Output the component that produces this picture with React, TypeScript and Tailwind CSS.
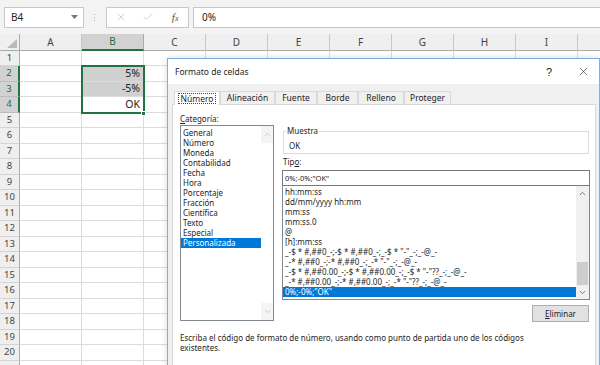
import { X, Check, ChevronUp, ChevronDown } from "lucide-react";

const COLS = ["A", "B", "C", "D", "E", "F", "G", "H", "I", "J"];
const ROWS = Array.from({ length: 21 }, (_, i) => i + 1);

const CATEGORIES = [
  "General",
  "Número",
  "Moneda",
  "Contabilidad",
  "Fecha",
  "Hora",
  "Porcentaje",
  "Fracción",
  "Científica",
  "Texto",
  "Especial",
  "Personalizada",
];

const TYPES = [
  "hh:mm:ss",
  "dd/mm/yyyy hh:mm",
  "mm:ss",
  "mm:ss.0",
  "@",
  "[h]:mm:ss",
  '_-$ * #,##0_-;-$ * #,##0_-;_-$ * "-"_-;_-@_-',
  '_-* #,##0_-;-* #,##0_-;_-* "-"_-;_-@_-',
  '_-$ * #,##0.00_-;-$ * #,##0.00_-;_-$ * "-"??_-;_-@_-',
  '_-* #,##0.00_-;-* #,##0.00_-;_-* "-"??_-;_-@_-',
  '0%;-0%;"OK"',
];

const TABS = [
  { label: "Número", w: "w-[46px]" },
  { label: "Alineación", w: "w-[55px]" },
  { label: "Fuente", w: "w-[42px]" },
  { label: "Borde", w: "w-[41px]" },
  { label: "Relleno", w: "w-[46px]" },
  { label: "Proteger", w: "w-[47px]" },
];

function Toolbar() {
  return (
    <div className="h-[34px] bg-[#f3f3f3] flex items-center">
      <div className="ml-[4px] w-[80px] h-[21px] bg-white border border-[#c8c8c8] flex items-center pl-[6px] pr-[5px] text-[10px] text-[#222]">
        <span>B4</span>
        <svg className="ml-auto" width="7" height="4" viewBox="0 0 7 4">
          <path d="M0 0h7L3.5 4z" fill="#777" />
        </svg>
      </div>
      <div className="ml-[10px] flex flex-col gap-[2px]">
        <div className="w-[1px] h-[1px] bg-[#b0b0b0]" />
        <div className="w-[1px] h-[1px] bg-[#b0b0b0]" />
        <div className="w-[1px] h-[1px] bg-[#b0b0b0]" />
      </div>
      <div className="ml-[11px] w-[83px] h-[21px] bg-white border border-[#c8c8c8] flex items-center">
        <div className="w-[28px] flex justify-center text-[#b4b4b4]">
          <X size={12} strokeWidth={1.2} />
        </div>
        <div className="w-[28px] flex justify-center text-[#b4b4b4]">
          <Check size={12} strokeWidth={1.2} />
        </div>
        <div className="w-[26px] flex justify-center text-[#555] font-['Liberation_Serif',serif] italic text-[11px] leading-none">
          <span>f</span>
          <span className="text-[8px] mt-[3px]">x</span>
        </div>
      </div>
      <div className="ml-[4px] flex-1 h-[21px] bg-white border border-[#c8c8c8] border-r-0 flex items-center pl-[8px] text-[10px] text-[#222]">
        0%
      </div>
    </div>
  );
}

function Grid() {
  return (
    <div className="flex flex-col">
      <div className="flex h-[17px]">
        <div className="w-[20px] shrink-0 bg-[#efefef] border-r border-b border-[#ababab] flex items-end justify-end pr-[2px] pb-[2px]">
          <svg width="10" height="9" viewBox="0 0 10 9">
            <path d="M10 0V9H0z" fill="#b9b9b9" />
          </svg>
        </div>
        {COLS.map((c) =>
          c === "B" ? (
            <div
              key={c}
              className="w-[62px] shrink-0 bg-[#d2d2d2] border-r border-[#ababab] border-b-2 border-b-[#217346] flex items-center justify-center text-[10px] text-[#1f6b3f]"
            >
              {c}
            </div>
          ) : (
            <div
              key={c}
              className="w-[62px] shrink-0 bg-[#efefef] border-r border-[#c8c8c8] border-b border-b-[#ababab] flex items-center justify-center text-[10px] text-[#444]"
            >
              {c === "J" ? "" : c}
            </div>
          )
        )}
      </div>
      {ROWS.map((r) => {
        const sel = r >= 2 && r <= 4;
        return (
          <div key={r} className={r % 2 === 1 ? "flex h-[15px]" : "flex h-[16px]"}>
            {sel ? (
              <div className="w-[20px] shrink-0 bg-[#d2d2d2] border-r-2 border-r-[#217346] border-b border-b-[#bdbdbd] flex items-center justify-center text-[9.5px] text-[#1f6b3f]">
                {r}
              </div>
            ) : (
              <div className="w-[20px] shrink-0 bg-[#efefef] border-r border-r-[#ababab] border-b border-b-[#d4d4d4] flex items-center justify-center text-[9.5px] text-[#444]">
                {r === 21 ? "" : r}
              </div>
            )}
            {COLS.map((c) => {
              const gray = c === "B" && (r === 2 || r === 3);
              let txt = "";
              if (c === "B" && r === 2) txt = "5%";
              if (c === "B" && r === 3) txt = "-5%";
              if (c === "B" && r === 4) txt = "OK";
              return (
                <div
                  key={c}
                  className={
                    gray
                      ? "w-[62px] shrink-0 bg-[#d0d0d0] border-r border-b border-[#dcdcdc] flex items-center justify-end pr-[3px] text-[10.5px] text-[#222]"
                      : "w-[62px] shrink-0 border-r border-b border-[#dcdcdc] flex items-center justify-end pr-[3px] text-[10.5px] text-[#222]"
                  }
                >
                  {txt}
                </div>
              );
            })}
          </div>
        );
      })}
    </div>
  );
}

function Dialog() {
  return (
    <div className="absolute left-[167px] top-[58px] w-[433px] h-[320px] border border-[#7fb0e0] bg-[#f0f0f0] flex flex-col text-[8px] leading-[10px] text-[#1e1e1e] shadow-[0_0_6px_rgba(0,0,0,0.15)]">
      <div className="h-[25px] bg-white flex items-center pl-[7px] text-[8.5px]">
        <span>Formato de celdas</span>
        <div className="ml-auto flex items-center">
          <span className="w-[30px] text-center text-[11px] font-['Liberation_Sans',sans-serif] text-[#222]">?</span>
          <span className="ml-[3px] w-[32px] flex justify-center text-[#222]">
            <X size={13} strokeWidth={1.1} />
          </span>
        </div>
      </div>
      <div className="flex-1 pl-[4px] pr-[3px] pt-[7px] flex flex-col">
        <div className="flex pl-[2px] h-[13px] items-end">
          {TABS.map((t, i) =>
            i === 0 ? (
              <div
                key={t.label}
                className={`${t.w} h-[14px] -mb-px relative z-10 bg-white border-l border-t border-r border-[#d9d9d9] flex items-center justify-center text-[8.5px]`}
              >
                <span className="border border-dotted border-[#444] px-[2px] leading-[9px]">{t.label}</span>
              </div>
            ) : (
              <div
                key={t.label}
                className={`${t.w} h-[13px] bg-[#f0f0f0] border-l border-t border-r border-[#d9d9d9] flex items-center justify-center text-[8.5px]`}
              >
                {t.label}
              </div>
            )
          )}
        </div>
        <div className="flex-1 bg-white border border-[#d9d9d9] flex flex-col pl-[7px] pr-[4px]">
          <div className="flex">
            <div className="w-[94px] shrink-0 pt-[9px] flex flex-col">
              <div className="h-[10px]">
                <span className="underline underline-offset-1">C</span>ategoría:
              </div>
              <div className="mt-[1px] h-[196px] border border-[#828790] flex">
                <div className="flex-1 pt-[2px] flex flex-col">
                  {CATEGORIES.map((c) =>
                    c === "Personalizada" ? (
                      <div key={c} className="h-[10px] px-[2px] bg-[#0078d7] text-white">
                        {c}
                      </div>
                    ) : (
                      <div key={c} className="h-[10px] px-[2px]">
                        {c}
                      </div>
                    )
                  )}
                </div>
                <div className="w-[12px] flex flex-col text-[#bcbcbc]">
                  <div className="h-[17px] bg-[#f4f4f4] flex items-center justify-center">
                    <ChevronUp size={9} strokeWidth={2} />
                  </div>
                  <div className="flex-1" />
                  <div className="h-[17px] bg-[#f4f4f4] flex items-center justify-center">
                    <ChevronDown size={9} strokeWidth={2} />
                  </div>
                </div>
              </div>
            </div>
            <div className="ml-[8px] w-[308px] pt-[21px] flex flex-col">
              <fieldset className="mx-[1px] border border-[#dcdcdc] pl-[5px] pt-[5px] pb-[2px]">
                <legend className="-ml-[3px] px-[1px] leading-[10px]">Muestra</legend>
                <div className="h-[10px]">OK</div>
              </fieldset>
              <div className="mt-[3px] h-[10px] pl-[1px]">
                Tip<span className="underline underline-offset-1">o</span>:
              </div>
              <div className="mt-[3px] h-[16px] border border-[#7a7a7a] flex items-center pl-[2px] text-[7.5px]">
                0%;-0%;"OK"
              </div>
              <div className="h-[114px] border border-[#828790] border-t-0 flex">
                <div className="flex-1 pt-[1px] flex flex-col overflow-hidden">
                  {TYPES.map((t, i) =>
                    i === TYPES.length - 1 ? (
                      <div key={i} className="h-[10px] px-[2px] bg-[#0078d7] text-white whitespace-pre">
                        {t}
                      </div>
                    ) : (
                      <div key={i} className="h-[10px] px-[2px] whitespace-pre">
                        {t}
                      </div>
                    )
                  )}
                </div>
                <div className="w-[13px] bg-[#f0f0f0] flex flex-col text-[#606060]">
                  <div className="h-[15px] flex items-center justify-center">
                    <ChevronUp size={9} strokeWidth={2.2} />
                  </div>
                  <div className="flex-1" />
                  <div className="h-[23px] mx-[1px] bg-[#cdcdcd]" />
                  <div className="h-[14px] flex items-center justify-center">
                    <ChevronDown size={9} strokeWidth={2.2} />
                  </div>
                </div>
              </div>
              <div className="mt-[5px] self-end mr-[1px] w-[57px] h-[17px] bg-[#e1e1e1] border border-[#adadad] flex items-center justify-center">
                <span>
                  <span className="underline underline-offset-1">E</span>liminar
                </span>
              </div>
            </div>
          </div>
          <div className="mt-[11px] leading-[10px]">
            Escriba el código de formato de número, usando como punto de partida uno de los códigos
            <br />
            existentes.
          </div>
        </div>
      </div>
    </div>
  );
}

export default function App() {
  return (
    <div className="relative w-[600px] h-[365px] overflow-hidden bg-white font-['Noto_Sans',sans-serif]">
      <Toolbar />
      <Grid />
      <div className="absolute left-[81px] top-[65px] w-[64px] h-[49px] border-2 border-[#217346]" />
      <div className="absolute left-[141px] top-[111px] w-[5px] h-[5px] bg-[#217346] border border-white" />
      <Dialog />
    </div>
  );
}
